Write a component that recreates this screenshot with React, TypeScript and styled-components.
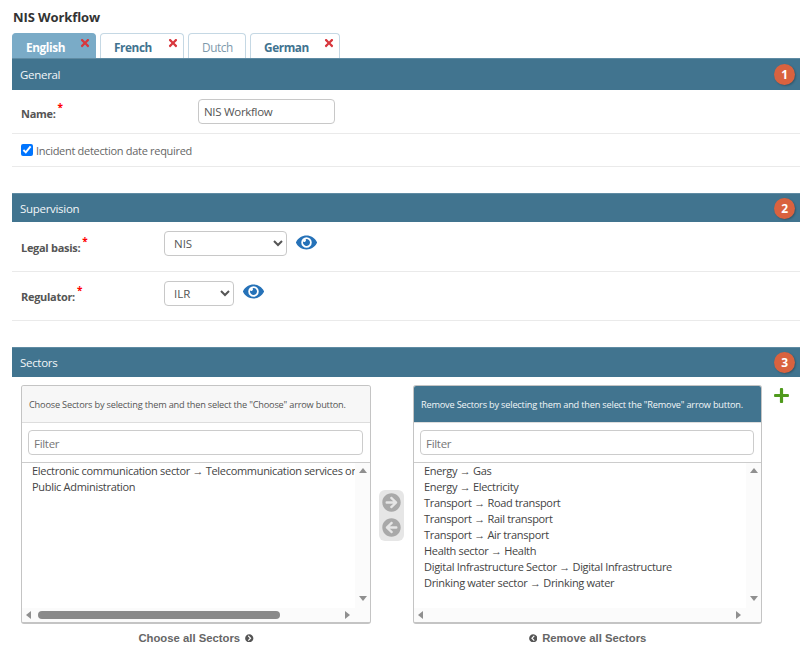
import React from 'react';
import styled, { createGlobalStyle } from 'styled-components';
import { FaArrowCircleLeft, FaArrowCircleRight, FaChevronCircleLeft, FaChevronCircleRight, FaEye, FaPlus, FaTimes } from 'react-icons/fa';

const GlobalStyle = createGlobalStyle`
  html, body {
    margin: 0;
    padding: 0;
    background: #fff;
    overflow: hidden;
  }
  * {
    box-sizing: border-box;
  }
`;

const Page = styled.div`
  width: 800px;
  height: 650px;
  padding: 10px 0 0 12px;
  overflow: hidden;
  font-family: 'Open Sans', 'Liberation Sans', sans-serif;
  font-size: 11.5px;
  letter-spacing: -0.3px;
  color: #555;
`;

const Title = styled.div`
  height: 23px;
  padding-left: 1px;
  font-size: 13px;
  line-height: 15px;
  font-weight: 700;
  letter-spacing: -0.1px;
  color: #333;
`;

const Tabs = styled.div`
  display: flex;
  height: 25px;
  gap: 4px;
`;

const Tab = styled.div<{ $active?: boolean; $disabled?: boolean; $width: number }>`
  position: relative;
  width: ${(p) => p.$width}px;
  padding: 5px 0 0 13px;
  border: 1px solid ${(p) => (p.$active ? '#7aabc7' : '#c5d8e4')};
  border-bottom: none;
  border-radius: 4px 4px 0 0;
  background: ${(p) => (p.$active ? '#7aabc7' : '#fff')};
  color: ${(p) => (p.$active ? '#fff' : p.$disabled ? '#7d99ab' : '#41738f')};
  font-size: 11.8px;
  letter-spacing: -0.4px;
  line-height: 16px;
  font-weight: ${(p) => (p.$disabled ? 400 : 700)};
`;

const TabClose = styled.span`
  position: absolute;
  top: 3px;
  right: 4px;
  display: flex;
  font-size: 12px;
  color: #d8373d;
`;

const SectionBar = styled.div<{ $height: number }>`
  display: flex;
  align-items: center;
  justify-content: space-between;
  height: ${(p) => p.$height}px;
  padding: 0 5px 0 8px;
  background: #41748f;
  border-top: 1px solid #5f8ba3;
  color: #f2f6f8;
  font-size: 11.5px;
`;

const Badge = styled.span`
  display: flex;
  align-items: center;
  justify-content: center;
  width: 21px;
  height: 21px;
  border-radius: 50%;
  background: #d9623f;
  box-shadow: 1px 1px 2px rgba(0, 0, 0, 0.25);
  color: #fff;
  font-size: 12px;
  font-weight: 700;
`;

const Row = styled.div<{ $height: number }>`
  display: flex;
  height: ${(p) => p.$height}px;
  align-items: center;
  padding-left: 9px;
  border-bottom: 1px solid #eaeaea;
`;

const Label = styled.label<{ $width: number; $top: number }>`
  display: block;
  flex: none;
  width: ${(p) => p.$width}px;
  padding-top: ${(p) => p.$top}px;
  font-size: 11px;
  font-weight: 700;
  color: #555;
`;

const Required = styled.sup`
  position: relative;
  top: -2px;
  margin-left: 2px;
  font-size: 10px;
  line-height: 0;
  color: #f00;
`;

const TextInput = styled.input`
  width: 137px;
  height: 25px;
  padding: 0 5px;
  border: 1px solid #c8c8c8;
  border-radius: 4px;
  font: inherit;
  letter-spacing: inherit;
  color: #555;
`;

const Check = styled.label`
  display: flex;
  align-items: center;
  gap: 3px;
  font-size: 11px;
  color: #666;
  white-space: nowrap;
  input {
    width: 12px;
    height: 12px;
    margin: 0;
  }
`;

const Select = styled.select<{ $width: number }>`
  width: ${(p) => p.$width}px;
  height: 25px;
  margin-top: -6px;
  padding: 0 4px 0 5px;
  border: 1px solid #c8c8c8;
  border-radius: 4px;
  background: #fff;
  font: inherit;
  color: #555;
`;

const EyeIcon = styled.span`
  display: flex;
  margin: -9px 0 0 9px;
  font-size: 21px;
  color: #2672b8;
`;

const Spacer = styled.div<{ $height: number }>`
  height: ${(p) => p.$height}px;
`;

const Lists = styled.div`
  display: grid;
  grid-template-columns: 350px 42px 349px 38px;
  padding: 8px 0 0 9px;
`;

const ListColumn = styled.div`
  display: flex;
  flex-direction: column;
  align-items: center;
`;

const ListBox = styled.div`
  width: 100%;
  height: 239px;
  display: flex;
  flex-direction: column;
  border: 1px solid #c4c4c4;
  border-bottom-width: 2px;
  border-radius: 3px;
  overflow: hidden;
`;

const ListHead = styled.div<{ $selected?: boolean }>`
  height: 37px;
  padding: 9px 0 0 7px;
  background: ${(p) => (p.$selected ? '#41748f' : '#f7f7f7')};
  border-bottom: 1px solid #ddd;
  color: ${(p) => (p.$selected ? '#f2f6f8' : '#555')};
  font-size: 9.2px;
  letter-spacing: -0.19px;
  line-height: 20px;
  white-space: nowrap;
`;

const FilterWrap = styled.div`
  height: 40px;
  padding: 7px 7px 0 6px;
  border-bottom: 1px solid #ccc;
`;

const Filter = styled.input`
  display: block;
  width: 100%;
  height: 25px;
  padding: 2px 5px 0;
  border: 1px solid #ccc;
  border-radius: 4px;
  font: inherit;
  letter-spacing: inherit;
  &::placeholder {
    color: #777;
    opacity: 1;
  }
`;

const Scroller = styled.div`
  flex: 1;
  display: grid;
  grid-template-columns: 1fr 15px;
  grid-template-rows: 1fr 14px;
  min-height: 0;
`;

const Options = styled.div`
  padding: 0 0 0 10px;
  overflow: hidden;
`;

const Option = styled.div`
  height: 16px;
  line-height: 16px;
  font-size: 11px;
  letter-spacing: -0.31px;
  color: #444;
  white-space: nowrap;
`;

const VTrack = styled.div`
  display: flex;
  flex-direction: column;
  align-items: center;
  justify-content: space-between;
  padding: 5px 0 7px;
  background: #fbfbfb;
`;

const HTrack = styled.div`
  display: flex;
  align-items: center;
  justify-content: space-between;
  gap: 7px;
  padding: 0 5px 0 4px;
  background: #fbfbfb;
`;

const Corner = styled.div`
  background: #fbfbfb;
`;

const HThumb = styled.div<{ $width: number }>`
  width: ${(p) => p.$width}px;
  height: 8px;
  margin-right: auto;
  border-radius: 4px;
  background: #8a8a8a;
`;

const Triangle = styled.span<{ $dir: 'up' | 'down' | 'left' | 'right' }>`
  flex: none;
  width: 0;
  height: 0;
  border-style: solid;
  border-color: transparent;
  ${(p) =>
    p.$dir === 'up'
      ? 'border-width: 0 4.5px 5px; border-bottom-color: #8f8f8f;'
      : p.$dir === 'down'
        ? 'border-width: 5px 4.5px 0; border-top-color: #8f8f8f;'
        : p.$dir === 'left'
          ? 'border-width: 4.5px 5px 4.5px 0; border-right-color: #8f8f8f;'
          : 'border-width: 4.5px 0 4.5px 5px; border-left-color: #8f8f8f;'}
`;

const Mover = styled.div`
  display: flex;
  justify-content: flex-start;
  padding: 105px 0 0 8px;
`;

const MoverPill = styled.div`
  display: flex;
  flex-direction: column;
  align-items: center;
  gap: 6px;
  width: 25px;
  height: 51px;
  padding-top: 3px;
  border-radius: 6px;
  background: #e6e6e6;
  color: #a9a9a9;
  font-size: 19px;
  svg {
    display: block;
  }
`;

const AllLink = styled.div`
  display: flex;
  align-items: center;
  gap: 5px;
  margin-top: 8px;
  font-family: 'Liberation Sans', Arial, sans-serif;
  font-size: 11.3px;
  letter-spacing: 0;
  font-weight: 700;
  color: #666;
  svg {
    font-size: 8.5px;
    color: #555;
  }
`;

const AddCell = styled.div`
  padding: 2px 0 0 11px;
  font-size: 17px;
  color: #4f9a1c;
  svg {
    display: block;
  }
`;

const leftOptions = ['Electronic communication sector → Telecommunication services or', 'Public Administration'];

const rightOptions = [
  'Energy → Gas',
  'Energy → Electricity',
  'Transport → Road transport',
  'Transport → Rail transport',
  'Transport → Air transport',
  'Health sector → Health',
  'Digital Infrastructure Sector → Digital Infrastructure',
  'Drinking water sector → Drinking water',
];

const tabs = [
  { name: 'English', width: 84, active: true, close: true },
  { name: 'French', width: 84, close: true },
  { name: 'Dutch', width: 58, disabled: true },
  { name: 'German', width: 90, close: true },
];

const Scrollbars = ({ thumb, children }: { thumb?: number; children: React.ReactNode }) => (
  <Scroller>
    <Options>{children}</Options>
    <VTrack>
      <Triangle $dir="up" />
      <Triangle $dir="down" />
    </VTrack>
    <HTrack>
      <Triangle $dir="left" />
      {thumb ? <HThumb $width={thumb} /> : null}
      <Triangle $dir="right" />
    </HTrack>
    <Corner />
  </Scroller>
);

const App = () => {
  return (
    <Page>
      <GlobalStyle />
      <Title>NIS Workflow</Title>
      <Tabs>
        {tabs.map((t) => (
          <Tab key={t.name} $width={t.width} $active={t.active} $disabled={t.disabled}>
            {t.name}
            {t.close ? (
              <TabClose>
                <FaTimes />
              </TabClose>
            ) : null}
          </Tab>
        ))}
      </Tabs>

      <SectionBar $height={32}>
        General
        <Badge>1</Badge>
      </SectionBar>
      <Row $height={44}>
        <Label $width={177} $top={4}>
          Name:<Required>*</Required>
        </Label>
        <TextInput defaultValue="NIS Workflow" />
      </Row>
      <Row $height={33}>
        <Check>
          <input type="checkbox" defaultChecked />
          Incident detection date required
        </Check>
      </Row>
      <Spacer $height={26} />

      <SectionBar $height={29}>
        Supervision
        <Badge>2</Badge>
      </SectionBar>
      <Row $height={50}>
        <Label $width={143} $top={2}>
          Legal basis:<Required>*</Required>
        </Label>
        <Select $width={123} defaultValue="NIS">
          <option>NIS</option>
        </Select>
        <EyeIcon>
          <FaEye />
        </EyeIcon>
      </Row>
      <Row $height={49}>
        <Label $width={143} $top={0}>
          Regulator:<Required>*</Required>
        </Label>
        <Select $width={70} defaultValue="ILR">
          <option>ILR</option>
        </Select>
        <EyeIcon>
          <FaEye />
        </EyeIcon>
      </Row>
      <Spacer $height={26} />

      <SectionBar $height={30}>
        Sectors
        <Badge>3</Badge>
      </SectionBar>
      <Lists>
        <ListColumn>
          <ListBox>
            <ListHead>Choose Sectors by selecting them and then select the "Choose" arrow button.</ListHead>
            <FilterWrap>
              <Filter placeholder="Filter" />
            </FilterWrap>
            <Scrollbars thumb={242}>
              {leftOptions.map((o) => (
                <Option key={o}>{o}</Option>
              ))}
            </Scrollbars>
          </ListBox>
          <AllLink>
            Choose all Sectors <FaChevronCircleRight />
          </AllLink>
        </ListColumn>
        <Mover>
          <MoverPill>
            <FaArrowCircleRight />
            <FaArrowCircleLeft />
          </MoverPill>
        </Mover>
        <ListColumn>
          <ListBox>
            <ListHead $selected>Remove Sectors by selecting them and then select the "Remove" arrow button.</ListHead>
            <FilterWrap>
              <Filter placeholder="Filter" />
            </FilterWrap>
            <Scrollbars>
              {rightOptions.map((o) => (
                <Option key={o}>{o}</Option>
              ))}
            </Scrollbars>
          </ListBox>
          <AllLink>
            <FaChevronCircleLeft /> Remove all Sectors
          </AllLink>
        </ListColumn>
        <AddCell>
          <FaPlus />
        </AddCell>
      </Lists>
    </Page>
  );
};

export default App;
